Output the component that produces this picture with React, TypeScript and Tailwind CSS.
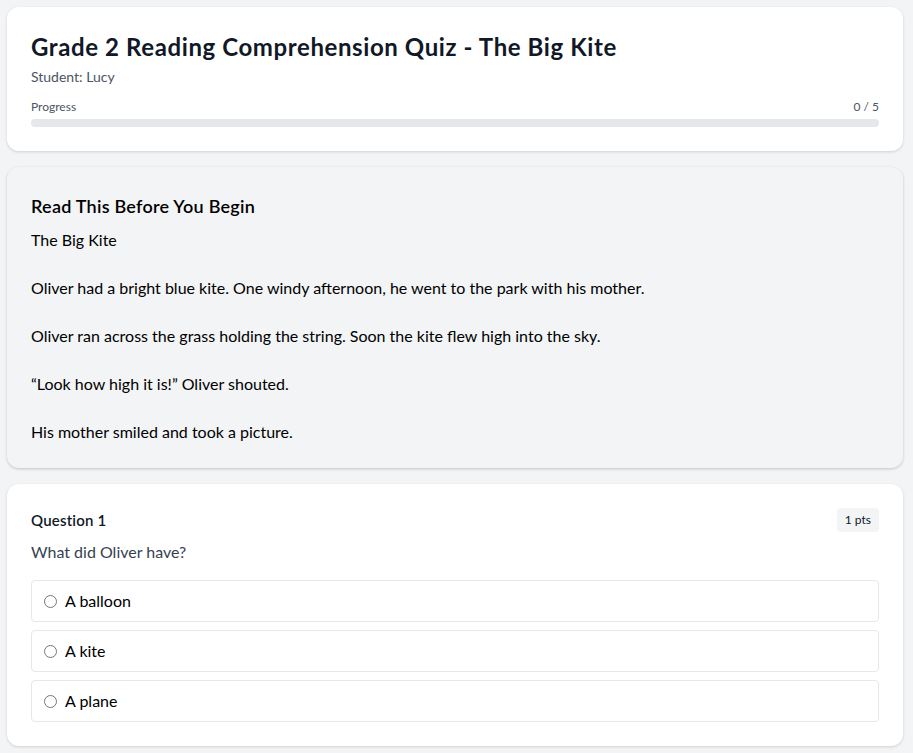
import React from 'react';

const passage = `The Big Kite

Oliver had a bright blue kite. One windy afternoon, he went to the park with his mother.

Oliver ran across the grass holding the string. Soon the kite flew high into the sky.

“Look how high it is!” Oliver shouted.

His mother smiled and took a picture.`;

const options = ['A balloon', 'A kite', 'A plane'];

const App: React.FC = () => {
  return (
    <div
      className="min-h-screen bg-[#f3f4f6] pt-[7px] pl-[7px] pr-[10px] pb-4"
      style={{ fontFamily: '"Segoe UI", Lato, sans-serif' }}
    >
      <div className="flex flex-col gap-4">
        {/* Header */}
        <div className="bg-white rounded-xl shadow-[0_1px_3px_rgba(0,0,0,0.15)] p-6">
          <h1 className="text-2xl font-bold text-[#111827] leading-8 tracking-[0.6px]">
            Grade 2 Reading Comprehension Quiz - The Big Kite
          </h1>
          <p className="text-sm text-[#4b5563] mt-1">Student: Lucy</p>
          <div className="mt-3">
            <div className="flex justify-between text-xs text-[#4b5563] mb-1">
              <span>Progress</span>
              <span>0 / 5</span>
            </div>
            <div className="h-2 bg-[#e5e7eb] rounded-full">
              <div className="h-2 bg-blue-600 rounded-full w-0" />
            </div>
          </div>
        </div>

        {/* Passage */}
        <div className="bg-[#f3f4f6] rounded-xl shadow-[0_1px_3px_rgba(0,0,0,0.2)] px-6 pt-[25px] pb-6">
          <h2 className="text-lg font-semibold text-black mb-2 tracking-[0.25px]">Read This Before You Begin</h2>
          <div className="whitespace-pre-line text-base leading-6 text-black">{passage}</div>
        </div>

        {/* Question */}
        <div className="bg-white rounded-xl shadow-[0_1px_3px_rgba(0,0,0,0.15)] p-6">
          <div className="flex justify-between items-center">
            <h3 className="text-[15px] font-semibold text-[#111827] tracking-[0.2px]">Question 1</h3>
            <span className="text-xs text-[#111827] bg-[#f3f4f6] rounded px-2 py-1">1 pts</span>
          </div>
          <p className="text-base text-[#374151] mt-2 mb-4">What did Oliver have?</p>
          <div className="flex flex-col gap-2">
            {options.map((o) => (
              <label
                key={o}
                className="flex items-center gap-2 border border-[#e5e7eb] rounded px-3 py-2 text-black"
              >
                <input type="radio" name="q1" className="w-[13px] h-[13px]" />
                <span>{o}</span>
              </label>
            ))}
          </div>
        </div>
      </div>
    </div>
  );
};

export default App;
